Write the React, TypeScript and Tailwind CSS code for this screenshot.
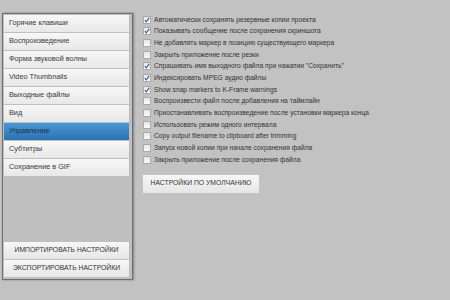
import React from "react";

const navItems = [
  "Горячие клавиши",
  "Воспроизведение",
  "Форма звуковой волны",
  "Video Thumbnails",
  "Выходные файлы",
  "Вид",
  "Управление",
  "Субтитры",
  "Сохранение в GIF",
];

const options: [string, boolean][] = [
  ["Автоматически сохранять резервные копии проекта", true],
  ["Показывать сообщение после сохранения скриншота", true],
  ["Не добавлять маркер в позицию существующего маркера", false],
  ["Закрыть приложение после резки", false],
  ["Спрашивать имя выходного файла при нажатии \"Сохранить\"", true],
  ["Индексировать MPEG аудио файлы", true],
  ["Show snap markers to K-Frame warnings", true],
  ["Воспроизвести файл после добавления на таймлайн", false],
  ["Приостанавливать воспроизведение после установки маркера конца", false],
  ["Использовать режим одного интервала", false],
  ["Copy output filename to clipboard after trimming", false],
  ["Запуск новой копии при начале сохранения файла", false],
  ["Закрыть приложение после сохранения файла", false],
];

function Check({ on }: { on: boolean }) {
  return (
    <div className="w-[8px] h-[8px] border border-[#a9a9a9] bg-gradient-to-b from-[#e6e6e6] to-[#fafafa] flex items-center justify-center shrink-0">
      {on && (
        <svg width="6" height="6" viewBox="0 0 6 6">
          <path d="M0.8 3.2 L2.3 4.8 L5.2 0.9" stroke="#3a5a8a" strokeWidth="1.1" fill="none" />
        </svg>
      )}
    </div>
  );
}

export default function App() {
  return (
    <div
      className="w-[450px] h-[300px] bg-[#c2c2c2] flex text-[#333]"
      style={{ fontFamily: '"Liberation Sans", Arial, sans-serif' }}
    >
      <div className="ml-[2px] mt-[13px] w-[131px] h-[267px] border border-[#6e6e6e] bg-[#bfbfbf] flex flex-col justify-between pl-[1px] pr-[3px] pt-[1px] pb-[2px] shadow-[1px_0_2px_rgba(0,0,0,0.35)]">
        <div className="flex flex-col gap-[1px]">
          {navItems.map((t) => {
            const sel = t === "Управление";
            return (
              <div
                key={t}
                className={
                  "h-[17px] flex items-center pl-[5px] text-[7.3px] " +
                  (sel
                    ? "bg-gradient-to-b from-[#4a97d4] to-[#2c72b4] text-[#1e2f44]"
                    : "bg-gradient-to-b from-[#f7f7f7] to-[#e8e8e8] text-[#3a3a3a]")
                }
              >
                {t}
              </div>
            );
          })}
        </div>
        <div className="flex flex-col gap-[1px]">
          {["ИМПОРТИРОВАТЬ НАСТРОЙКИ", "ЭКСПОРТИРОВАТЬ НАСТРОЙКИ"].map((t) => (
            <div
              key={t}
              className="h-[17px] flex items-center justify-center text-[6.8px] bg-gradient-to-b from-[#f7f7f7] to-[#e6e6e6] text-[#333]"
            >
              {t}
            </div>
          ))}
        </div>
      </div>
      <div className="ml-[10px] mt-[14px] flex flex-col">
        {options.map(([t, on]) => (
          <div key={t} className="h-[11.67px] flex items-center gap-[3px]">
            <Check on={on} />
            <span className="text-[6.7px] whitespace-nowrap text-[#333]">{t}</span>
          </div>
        ))}
        <div className="mt-[9px] w-[116px] h-[18px] flex items-center justify-center text-[6.8px] bg-gradient-to-b from-[#f7f7f7] to-[#e6e6e6] text-[#333]">
          НАСТРОЙКИ ПО УМОЛЧАНИЮ
        </div>
      </div>
    </div>
  );
}
